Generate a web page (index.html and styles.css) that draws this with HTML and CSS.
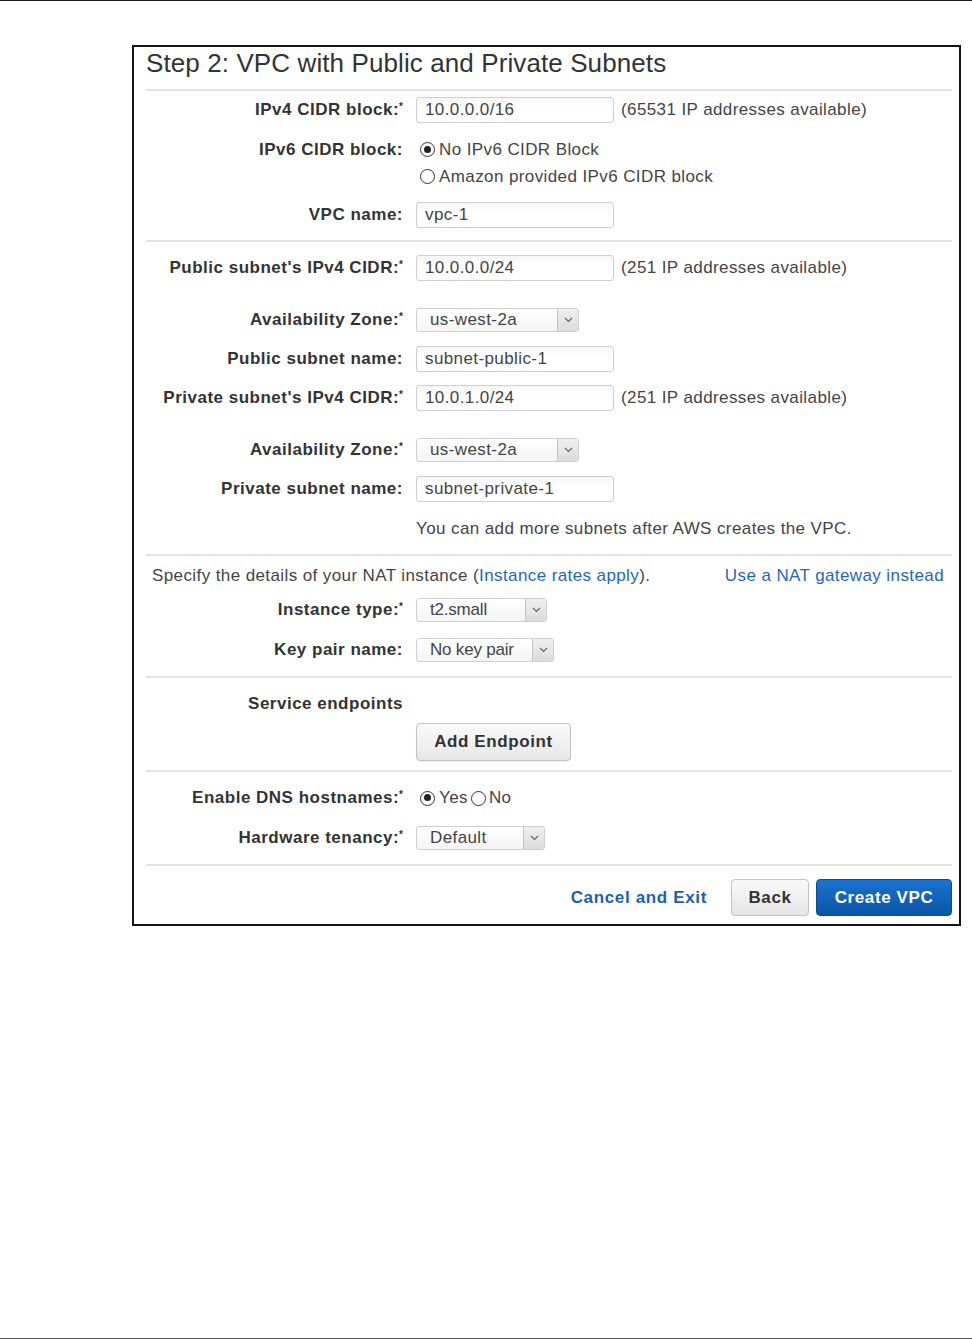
FILE: index.html
```html
<!DOCTYPE html>
<html lang="en">
<head>
<meta charset="utf-8">
<title>Step 2: VPC with Public and Private Subnets</title>
<link rel="stylesheet" href="styles.css">
</head>
<body>
<div class="page">
  <div class="panel">
    <h1 class="title">Step 2: VPC with Public and Private Subnets</h1>

    <section class="sec sec-1">
      <div class="row r-first">
        <div class="label">IPv4 CIDR block:<span class="req">*</span></div>
        <div class="ctrl"><span class="input">10.0.0.0/16</span><span class="hint">(65531 IP addresses available)</span></div>
      </div>
      <div class="row row-top r-radio">
        <div class="label lh27">IPv6 CIDR block:</div>
        <div class="radios">
          <div class="radio-line"><span class="radio on"></span>No IPv6 CIDR Block</div>
          <div class="radio-line"><span class="radio"></span>Amazon provided IPv6 CIDR block</div>
        </div>
      </div>
      <div class="row r-vpc">
        <div class="label">VPC name:</div>
        <div class="ctrl"><span class="input">vpc-1</span></div>
      </div>
    </section>

    <section class="sec sec-2">
      <div class="row r-13">
        <div class="label">Public subnet's IPv4 CIDR:<span class="req">*</span></div>
        <div class="ctrl"><span class="input">10.0.0.0/24</span><span class="hint">(251 IP addresses available)</span></div>
      </div>
      <div class="row r-27">
        <div class="label">Availability Zone:<span class="req">*</span></div>
        <div class="ctrl"><span class="select w-az"><span class="sel-text">us-west-2a</span><span class="sel-btn"><svg width="9" height="6" viewBox="0 0 9 6"><polyline points="1,1 4.5,4.5 8,1" fill="none" stroke="#666" stroke-width="1.2"/></svg></span></span></div>
      </div>
      <div class="row r-14">
        <div class="label">Public subnet name:</div>
        <div class="ctrl"><span class="input">subnet-public-1</span></div>
      </div>
      <div class="row r-13">
        <div class="label">Private subnet's IPv4 CIDR:<span class="req">*</span></div>
        <div class="ctrl"><span class="input">10.0.1.0/24</span><span class="hint">(251 IP addresses available)</span></div>
      </div>
      <div class="row r-27">
        <div class="label">Availability Zone:<span class="req">*</span></div>
        <div class="ctrl"><span class="select w-az"><span class="sel-text">us-west-2a</span><span class="sel-btn"><svg width="9" height="6" viewBox="0 0 9 6"><polyline points="1,1 4.5,4.5 8,1" fill="none" stroke="#666" stroke-width="1.2"/></svg></span></span></div>
      </div>
      <div class="row r-14">
        <div class="label">Private subnet name:</div>
        <div class="ctrl"><span class="input">subnet-private-1</span></div>
      </div>
      <div class="row r-note">
        <div class="label"></div>
        <div class="note">You can add more subnets after AWS creates the VPC.</div>
      </div>
    </section>

    <section class="sec sec-3">
      <div class="nat-line">
        <span>Specify the details of your NAT instance (<a class="link" href="#">Instance rates apply</a>).</span>
        <a class="link" href="#">Use a NAT gateway instead</a>
      </div>
      <div class="row r-12">
        <div class="label">Instance type:<span class="req">*</span></div>
        <div class="ctrl"><span class="select w-inst"><span class="sel-text">t2.small</span><span class="sel-btn"><svg width="9" height="6" viewBox="0 0 9 6"><polyline points="1,1 4.5,4.5 8,1" fill="none" stroke="#666" stroke-width="1.2"/></svg></span></span></div>
      </div>
      <div class="row r-16">
        <div class="label">Key pair name:</div>
        <div class="ctrl"><span class="select w-key"><span class="sel-text">No key pair</span><span class="sel-btn"><svg width="9" height="6" viewBox="0 0 9 6"><polyline points="1,1 4.5,4.5 8,1" fill="none" stroke="#666" stroke-width="1.2"/></svg></span></span></div>
      </div>
    </section>

    <section class="sec sec-4">
      <div class="row r-se">
        <div class="label">Service endpoints</div>
        <div class="ctrl"></div>
      </div>
      <div class="row r-btn">
        <div class="label"></div>
        <div class="ctrl"><button class="btn btn-add">Add Endpoint</button></div>
      </div>
    </section>

    <section class="sec sec-5">
      <div class="row r-dns">
        <div class="label">Enable DNS hostnames:<span class="req">*</span></div>
        <div class="ctrl yesno"><span class="radio on"></span><span>Yes</span><span class="radio second"></span><span>No</span></div>
      </div>
      <div class="row r-18">
        <div class="label">Hardware tenancy:<span class="req">*</span></div>
        <div class="ctrl"><span class="select w-hw"><span class="sel-text">Default</span><span class="sel-btn"><svg width="9" height="6" viewBox="0 0 9 6"><polyline points="1,1 4.5,4.5 8,1" fill="none" stroke="#666" stroke-width="1.2"/></svg></span></span></div>
      </div>
    </section>

    <footer class="footer">
      <a class="cancel" href="#">Cancel and Exit</a>
      <button class="btn btn-back">Back</button>
      <button class="btn btn-primary">Create VPC</button>
    </footer>
  </div>
</div>
</body>
</html>
```

FILE: styles.css
```css
html, body {
  margin: 0;
  padding: 0;
  background: #ffffff;
}

body {
  font-family: "Liberation Sans", Arial, sans-serif;
  font-size: 17px;
  color: #444;
  letter-spacing: 0.4px;
}

.page {
  box-sizing: border-box;
  height: 1339px;
  border-top: 1px solid #1a1a1a;
  border-bottom: 1px solid #555;
  padding: 44px 0 0 132px;
}

.panel {
  box-sizing: border-box;
  width: 829px;
  height: 881px;
  border: 2px solid #141414;
  padding: 0 7px 0 12px;
}

.title {
  margin: 1px 0 11px 0;
  height: 30px;
  line-height: 30px;
  font-size: 26px;
  font-weight: normal;
  color: #333;
  letter-spacing: 0.1px;
}

.sec {
  border-top: 2px solid #e3e3e3;
}

.sec-1 { padding-bottom: 12px; }
.sec-2 { padding-bottom: 15px; }
.sec-3 { padding-bottom: 14px; }
.sec-4 { padding-bottom: 9px; }
.sec-5 { padding-bottom: 14px; }

.row {
  display: grid;
  grid-template-columns: 257px 1fr;
  column-gap: 13px;
  align-items: center;
}

.row-top { align-items: start; }

.r-first { margin-top: 6px; }
.r-radio { margin-top: 13px; }
.r-vpc { margin-top: 12px; }
.r-12 { margin-top: 12px; }
.r-13 { margin-top: 13px; }
.r-14 { margin-top: 14px; }
.r-16 { margin-top: 16px; }
.r-18 { margin-top: 18px; }
.r-27 { margin-top: 27px; }
.r-note { margin-top: 17px; }
.r-se { margin-top: 16px; height: 20px; }
.r-btn { margin-top: 9px; }
.r-dns { margin-top: 16px; height: 20px; }

.label {
  text-align: right;
  font-weight: bold;
  color: #333;
  white-space: nowrap;
  line-height: 20px;
  letter-spacing: 0.5px;
}

.lh27 { line-height: 27px; }

.req {
  font-size: 10px;
  line-height: 0;
  vertical-align: 5px;
  margin-left: 0;
  letter-spacing: 0;
}

.ctrl {
  display: flex;
  align-items: center;
}

.input {
  box-sizing: border-box;
  display: inline-block;
  width: 198px;
  height: 26px;
  line-height: 24px;
  border: 1px solid #cfcfcf;
  border-radius: 3px;
  padding-left: 8px;
  color: #444;
  background: linear-gradient(#f6f6f6, #ffffff 40%);
}

.hint {
  margin-left: 7px;
  color: #444;
}

.radios {
  display: flex;
  flex-direction: column;
}

.radio-line {
  display: flex;
  align-items: center;
  height: 27px;
  color: #444;
}

.radio {
  box-sizing: border-box;
  display: inline-block;
  width: 15px;
  height: 15px;
  border: 1.5px solid #333;
  border-radius: 50%;
  margin: 0 4px 0 4px;
  position: relative;
  background: #fff;
  flex: none;
}

.radio.on::after {
  content: "";
  position: absolute;
  left: 2.5px;
  top: 2.5px;
  width: 7px;
  height: 7px;
  border-radius: 50%;
  background: #222;
}

.yesno .radio.second { margin-left: 3px; margin-right: 3px; }

.select {
  box-sizing: border-box;
  display: inline-flex;
  height: 24px;
  border: 1px solid #cfcfcf;
  border-radius: 3px;
  background: linear-gradient(#ffffff, #f4f4f4);
  overflow: hidden;
}

.sel-text {
  flex: 1;
  padding-left: 13px;
  line-height: 22px;
  color: #444;
  white-space: nowrap;
}

.sel-btn {
  width: 20px;
  border-left: 1px solid #c4c4c4;
  background: linear-gradient(#f0f0f0, #dcdcdc);
  display: flex;
  align-items: center;
  justify-content: center;
}

.w-az { width: 163px; }
.w-inst { width: 131px; }
.w-key { width: 138px; }
.w-hw { width: 129px; }

.w-inst .sel-text, .w-key .sel-text { letter-spacing: -0.2px; }

.note {
  line-height: 20px;
  color: #444;
}

.nat-line {
  margin-top: 10px;
  height: 20px;
  line-height: 20px;
  display: flex;
  justify-content: space-between;
  padding: 0 8px 0 6px;
  color: #444;
}

.link {
  color: #1f66c1;
  text-decoration: none;
}

.btn {
  box-sizing: border-box;
  font-family: "Liberation Sans", Arial, sans-serif;
  font-size: 17px;
  font-weight: bold;
  letter-spacing: 0.6px;
  border-radius: 4px;
  cursor: pointer;
  padding: 0;
}

.btn-add {
  width: 155px;
  height: 38px;
  color: #333;
  border: 1px solid #c2c2c2;
  background: linear-gradient(#fafafa, #e7e7e7);
  box-shadow: 0 1px 1px rgba(0,0,0,0.08);
}

.footer {
  border-top: 2px solid #e3e3e3;
  padding-top: 13px;
  display: flex;
  justify-content: flex-end;
  align-items: center;
}

.cancel {
  font-weight: bold;
  color: #1b5fb4;
  text-decoration: none;
  margin-right: 24px;
  letter-spacing: 0.65px;
}

.btn-back {
  width: 78px;
  height: 37px;
  color: #333;
  border: 1px solid #c2c2c2;
  background: linear-gradient(#fafafa, #e5e5e5);
  margin-right: 7px;
}

.btn-primary {
  width: 136px;
  height: 37px;
  color: #fff;
  border: 1px solid #0a4d98;
  background: linear-gradient(#1a72d0, #0b55a6);
}
```
